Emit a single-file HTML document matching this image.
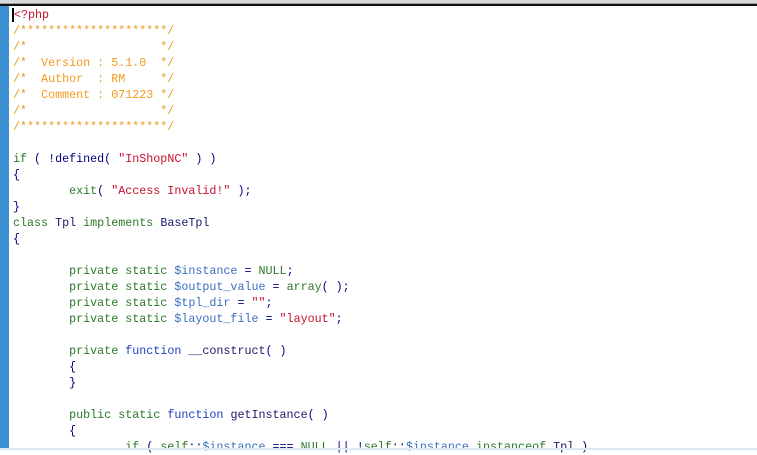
<!DOCTYPE html>
<html><head><meta charset="utf-8"><style>
html,body{margin:0;padding:0;width:757px;height:450px;overflow:hidden;background:#fff}
.top{position:absolute;left:0;top:0;width:757px;height:3px;background:#d8d8d8}
.top2{position:absolute;left:0;top:3px;width:757px;height:1px;background:#a0a0a0}
.top3{position:absolute;left:0;top:4px;width:757px;height:2px;background:#111}
.bar{position:absolute;left:0;top:6px;width:9px;height:444px;background:#3b8fd3}
.bot{position:absolute;left:0;top:448px;width:757px;height:2px;background:#dde8f2}
pre{position:absolute;left:13px;top:7px;margin:0;font-family:"Liberation Mono","Courier New",monospace;font-size:11.7px;line-height:16px;color:#000080;white-space:pre}
.c{color:#f29a1c}.k{color:#2a7a2a}.s{color:#c8102e}.f{color:#1f3fbf}.v{color:#3a70c0}.b{color:#1a1a6a}
.cur{border-left:2px solid #000;margin-left:-1px}
</style></head><body>
<div class="top"></div><div class="top2"></div><div class="top3"></div><div class="bar"></div>
<pre><span class="cur"></span><span class="s">&lt;?php</span>
<span class="c">/*********************/
/*                   */
/*  Version : 5.1.0  */
/*  Author  : RM     */
/*  Comment : 071223 */
/*                   */
/*********************/</span>

<span class="k">if</span> ( !defined( <span class="s">"InShopNC"</span> ) )
{
        <span class="k">exit</span>( <span class="s">"Access Invalid!"</span> );
}
<span class="k">class</span> <span class="b">Tpl</span> <span class="k">implements</span> <span class="b">BaseTpl</span>
{

        <span class="k">private static</span> <span class="v">$instance</span> = <span class="k">NULL</span>;
        <span class="k">private static</span> <span class="v">$output_value</span> = <span class="k">array</span>( );
        <span class="k">private static</span> <span class="v">$tpl_dir</span> = <span class="s">""</span>;
        <span class="k">private static</span> <span class="v">$layout_file</span> = <span class="s">"layout"</span>;

        <span class="k">private</span> <span class="f">function</span> <span class="b">__construct</span>( )
        {
        }

        <span class="k">public static</span> <span class="f">function</span> <span class="b">getInstance</span>( )
        {
                <span class="k">if</span> ( <span class="k">self</span>::<span class="v">$instance</span> === <span class="k">NULL</span> || !<span class="k">self</span>::<span class="v">$instance</span> <span class="k">instanceof</span> <span class="b">Tpl</span> )
</pre>
<div class="bot"></div>
</body></html>
